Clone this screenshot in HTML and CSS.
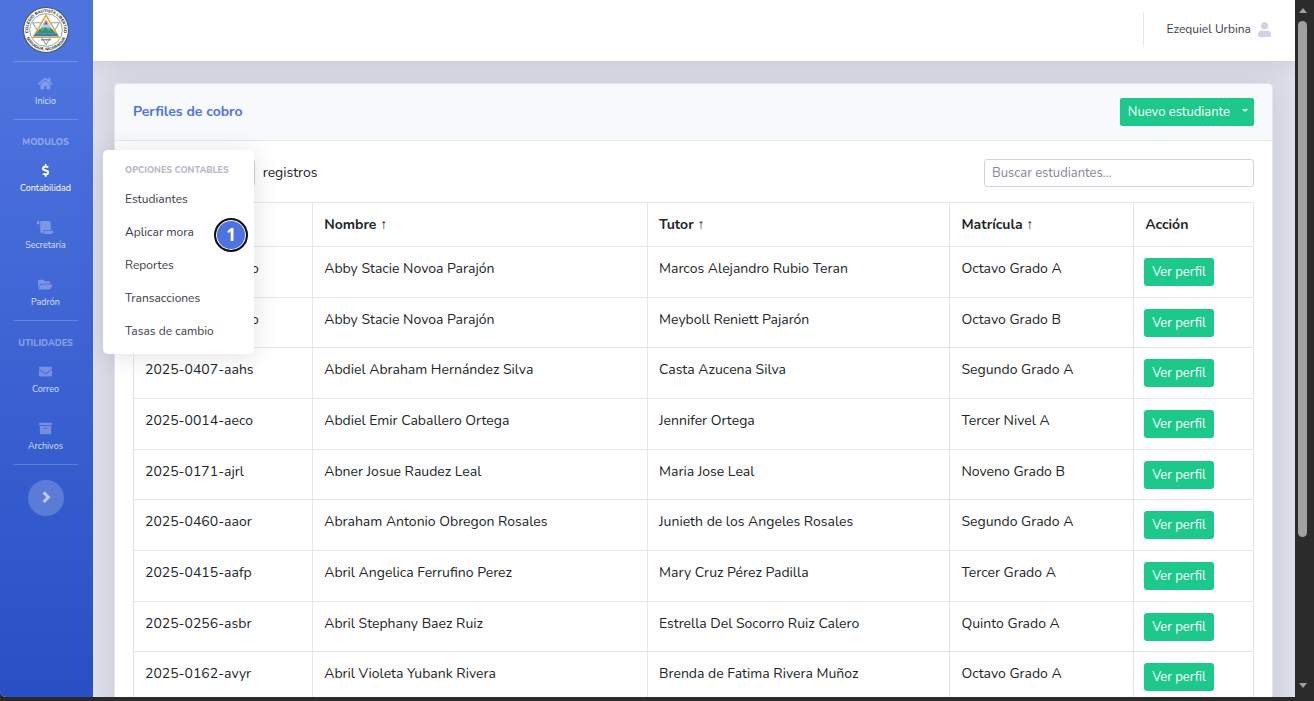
FILE: index.html
```html
<!DOCTYPE html>
<html lang="es">
<head>
<meta charset="utf-8">
<meta name="viewport" content="width=device-width, initial-scale=1">
<title>Perfiles de cobro</title>
<link rel="stylesheet" href="styles.css">
</head>
<body>
<div class="window">
  <div class="app">
    <nav class="sidebar" aria-label="Principal">
      <a class="brand" href="#" aria-label="Colegio Bautista Libertad">
        <svg class="brand-logo" viewBox="0 0 90 90">
          <defs>
            <path id="arc-top" d="M17 66A35 35 0 1 1 73 66"/>
            <path id="arc-bottom" d="M4 52A42 42 0 0 0 86 52"/>
          </defs>
          <circle cx="45" cy="45" r="44" fill="#fff" stroke="#3c5a50" stroke-width="2"/>
          <circle cx="45" cy="45" r="32" fill="#fff" stroke="#5d9583" stroke-width="1.500"/>
          <text class="seal-text"><textPath href="#arc-top" startOffset="50%" text-anchor="middle">COLEGIO BAUTISTA LIBERTAD</textPath></text>
          <text class="seal-text"><textPath href="#arc-bottom" startOffset="50%" text-anchor="middle">MANAGUA, NICARAGUA</textPath></text>
          <path d="M19 31H71L45 74Z" fill="#fff" stroke="#9aa3a0" stroke-width="2"/>
          <path d="M45 16L70 59H20Z" fill="#fff" stroke="#e6a63a" stroke-width="3"/>
          <path d="M45 22L56 41H34Z" fill="#a9d8ee"/>
          <path d="M45 27L49 34H41Z" fill="#d8413a"/>
          <path d="M36 40H54L64 52H26Z" fill="#4aa7dd"/>
          <path d="M25 52L33 42L38 47L44 39L50 47L56 42L65 52Z" fill="#43934b"/>
          <path d="M24 52H66L69 57H21Z" fill="#2f80c9"/>
          <path d="M35 64H55" stroke="#8c9290" stroke-width="3"/>
        </svg>
      </a>
      <hr class="divider">
      <a class="nav-item" href="#">
        <svg class="nav-icon" viewBox="0 0 576 512"><path d="M280.370 148.260L96 300.110V464a16 16 0 0 0 16 16l112.060-.29a16 16 0 0 0 15.920-16V368a16 16 0 0 1 16-16h64a16 16 0 0 1 16 16v95.640a16 16 0 0 0 16 16.050L464 480a16 16 0 0 0 16-16V300L295.670 148.260a12.190 12.190 0 0 0-15.300 0zM571.600 251.470L488 182.560V44.050a12 12 0 0 0-12-12h-56a12 12 0 0 0-12 12v72.610L318.470 43a48 48 0 0 0-61 0L4.340 251.470a12 12 0 0 0-1.600 16.900l25.500 31A12 12 0 0 0 45.150 301l235.220-193.740a12.190 12.190 0 0 1 15.300 0L530.900 301a12 12 0 0 0 16.900-1.600l25.500-31a12 12 0 0 0-1.700-16.930z"/></svg>
        <span>Inicio</span>
      </a>
      <hr class="divider">
      <h2 class="nav-heading">Modulos</h2>
      <div class="nav-group">
        <a class="nav-item active" href="#" aria-expanded="true">
          <svg class="nav-icon" viewBox="0 0 288 512"><path d="M209.200 233.400l-108-31.600C88.700 198.200 80 186.500 80 173.500c0-16.300 13.200-29.500 29.500-29.500h66.300c12.200 0 24.200 3.700 34.200 10.500 6.100 4.100 14.300 3.100 19.500-2l34.800-34c7.100-6.900 6.100-18.400-1.800-24.500C238 74.800 207.400 64.100 176 64V16c0-8.800-7.200-16-16-16h-32c-8.800 0-16 7.200-16 16v48h-2.500C45.800 64-5.400 118.700.5 183.600c4.200 46.100 39.400 83.600 83.800 96.600l102.500 30c12.500 3.700 21.200 15.300 21.200 28.300 0 16.300-13.200 29.500-29.500 29.500h-66.300C100 368 88 364.300 78 357.500c-6.100-4.100-14.300-3.100-19.500 2l-34.800 34c-7.100 6.900-6.100 18.400 1.800 24.500 24.500 19.200 55.100 29.900 86.500 30v48c0 8.800 7.200 16 16 16h32c8.800 0 16-7.200 16-16v-48.200c46.600-.9 90.300-28.600 105.700-72.700 21.500-61.600-14.600-124.800-72.500-141.700z"/></svg>
          <span>Contabilidad</span>
        </a>
        <div class="submenu">
          <h3 class="submenu-title">Opciones contables</h3>
          <a class="submenu-link" href="#">Estudiantes</a>
          <a class="submenu-link" href="#">Aplicar mora</a>
          <a class="submenu-link" href="#">Reportes</a>
          <a class="submenu-link" href="#">Transacciones</a>
          <a class="submenu-link" href="#">Tasas de cambio</a>
          <span class="step-badge">1</span>
        </div>
      </div>
      <a class="nav-item" href="#">
        <svg class="nav-icon" viewBox="0 0 640 512"><path d="M48 0C21.530 0 0 21.530 0 48v64c0 8.840 7.160 16 16 16h80V48C96 21.530 74.470 0 48 0zm208 412.570V352h288V96c0-52.940-43.060-96-96-96H111.590C121.740 13.410 128 29.920 128 48v368c0 38.870 34.650 69.650 74.750 63.120C234.220 474 256 444.460 256 412.570zM288 384v32c0 52.930-43.060 96-96 96h336c61.860 0 112-50.140 112-112 0-8.840-7.160-16-16-16H288z"/></svg>
        <span>Secretaría</span>
      </a>
      <a class="nav-item" href="#">
        <svg class="nav-icon" viewBox="0 0 576 512"><path d="M572.694 292.093L500.270 416.248A63.997 63.997 0 0 1 444.989 448H45.025c-18.523 0-30.064-20.093-20.731-36.093l72.424-124.155A64 64 0 0 1 152 256h399.964c18.523 0 30.064 20.093 20.730 36.093zM152 224h328v-48c0-26.510-21.490-48-48-48H272l-64-64H48C21.490 64 0 85.490 0 112v278.046l69.077-118.418C86.214 242.250 117.989 224 152 224z"/></svg>
        <span>Padrón</span>
      </a>
      <hr class="divider">
      <h2 class="nav-heading">Utilidades</h2>
      <a class="nav-item" href="#">
        <svg class="nav-icon" viewBox="0 0 512 512"><path d="M502.300 190.800c3.900-3.100 9.700-.2 9.700 4.700V400c0 26.500-21.500 48-48 48H48c-26.500 0-48-21.500-48-48V195.600c0-5 5.700-7.800 9.700-4.700 22.400 17.400 52.100 39.500 154.100 113.600 21.100 15.400 56.700 47.800 92.200 47.600 35.700.3 72-32.800 92.300-47.600 102-74.100 131.600-96.300 154-113.700zM256 320c23.200.4 56.600-29.200 73.400-41.400 132.700-96.300 142.800-104.700 173.400-128.700 5.800-4.500 9.200-11.500 9.200-18.900v-19c0-26.500-21.500-48-48-48H48c-26.500 0-48 21.500-48 48v19c0 7.400 3.400 14.300 9.200 18.900 30.600 23.900 40.700 32.400 173.400 128.700 16.800 12.200 50.200 41.800 73.400 41.400z"/></svg>
        <span>Correo</span>
      </a>
      <a class="nav-item" href="#">
        <svg class="nav-icon" viewBox="0 0 512 512"><path d="M32 448c0 17.700 14.300 32 32 32h384c17.700 0 32-14.300 32-32V160H32v288zm160-212c0-6.600 5.400-12 12-12h104c6.600 0 12 5.400 12 12v8c0 6.600-5.400 12-12 12H204c-6.600 0-12-5.400-12-12v-8zM480 32H32C14.300 32 0 46.300 0 64v48c0 8.800 7.200 16 16 16h480c8.800 0 16-7.200 16-16V64c0-17.700-14.300-32-32-32z"/></svg>
        <span>Archivos</span>
      </a>
      <hr class="divider">
      <button class="sidebar-toggle" type="button" aria-label="Expandir menú">
        <svg viewBox="0 0 10 12"><path d="M3 2L7 6L3 10" fill="none" stroke="currentColor" stroke-width="2.500"/></svg>
      </button>
    </nav>

    <div class="content">
      <header class="topbar">
        <a class="user" href="#">
          <span>Ezequiel Urbina</span>
          <svg class="user-icon" viewBox="0 0 448 512"><path d="M224 256c70.700 0 128-57.300 128-128S294.700 0 224 0 96 57.300 96 128s57.300 128 128 128zm89.600 32h-16.700c-22.200 10.200-46.900 16-72.900 16s-50.600-5.800-72.900-16h-16.700C60.200 288 0 348.200 0 422.400V464c0 26.500 21.500 48 48 48h352c26.500 0 48-21.500 48-48v-41.600c0-74.200-60.200-134.400-134.400-134.400z"/></svg>
        </a>
      </header>
      <main class="page">
        <section class="card">
          <div class="card-header">
            <h1 class="card-title">Perfiles de cobro</h1>
            <div class="btn-group">
              <button class="btn" type="button">Nuevo estudiante</button>
              <button class="btn btn-caret" type="button" aria-label="Más opciones"><span class="caret"></span></button>
            </div>
          </div>
          <div class="card-body">
            <div class="toolbar">
              <label class="page-size">
                <span>Mostrar</span>
                <select class="field"><option>10</option><option>25</option></select>
                <span>registros</span>
              </label>
              <input class="field search" type="search" placeholder="Buscar estudiantes..." aria-label="Buscar estudiantes">
            </div>
            <table class="table">
              <colgroup><col class="col-code"><col class="col-name"><col class="col-tutor"><col class="col-grade"><col class="col-action"></colgroup>
              <thead>
                <tr><th>Código ↑</th><th>Nombre ↑</th><th>Tutor ↑</th><th>Matrícula ↑</th><th>Acción</th></tr>
              </thead>
              <tbody>
                <tr><td>2025-0301-aamo</td><td>Abby Stacie Novoa Parajón</td><td>Marcos Alejandro Rubio Teran</td><td>Octavo Grado A</td><td><button class="btn" type="button">Ver perfil</button></td></tr>
                <tr><td>2025-0302-aamo</td><td>Abby Stacie Novoa Parajón</td><td>Meyboll Reniett Pajarón</td><td>Octavo Grado B</td><td><button class="btn" type="button">Ver perfil</button></td></tr>
                <tr><td>2025-0407-aahs</td><td>Abdiel Abraham Hernández Silva</td><td>Casta Azucena Silva</td><td>Segundo Grado A</td><td><button class="btn" type="button">Ver perfil</button></td></tr>
                <tr><td>2025-0014-aeco</td><td>Abdiel Emir Caballero Ortega</td><td>Jennifer Ortega</td><td>Tercer Nivel A</td><td><button class="btn" type="button">Ver perfil</button></td></tr>
                <tr><td>2025-0171-ajrl</td><td>Abner Josue Raudez Leal</td><td>Maria Jose Leal</td><td>Noveno Grado B</td><td><button class="btn" type="button">Ver perfil</button></td></tr>
                <tr><td>2025-0460-aaor</td><td>Abraham Antonio Obregon Rosales</td><td>Junieth de los Angeles Rosales</td><td>Segundo Grado A</td><td><button class="btn" type="button">Ver perfil</button></td></tr>
                <tr><td>2025-0415-aafp</td><td>Abril Angelica Ferrufino Perez</td><td>Mary Cruz Pérez Padilla</td><td>Tercer Grado A</td><td><button class="btn" type="button">Ver perfil</button></td></tr>
                <tr><td>2025-0256-asbr</td><td>Abril Stephany Baez Ruiz</td><td>Estrella Del Socorro Ruiz Calero</td><td>Quinto Grado A</td><td><button class="btn" type="button">Ver perfil</button></td></tr>
                <tr><td>2025-0162-avyr</td><td>Abril Violeta Yubank Rivera</td><td>Brenda de Fatima Rivera Muñoz</td><td>Octavo Grado A</td><td><button class="btn" type="button">Ver perfil</button></td></tr>
              </tbody>
            </table>
          </div>
        </section>
      </main>
    </div>
  </div>
  <div class="scrollbar" aria-hidden="true">
    <span class="arrow arrow-up"></span>
    <span class="track"><span class="thumb"></span></span>
    <span class="arrow arrow-down"></span>
  </div>
</div>
</body>
</html>
```
FILE: styles.css
```css
* {
  box-sizing: border-box;
}

body {
  margin: 0;
  background: #2a2a2a;
  color: #212529;
  font-family: Nunito, "Noto Sans", sans-serif;
  font-size: 14px;
  line-height: 22px;
}

h1, h2, h3 {
  margin: 0;
}

a {
  color: inherit;
  text-decoration: none;
}

button, input, select {
  font: inherit;
}

.window {
  display: flex;
  height: 100vh;
  padding-bottom: 4px;
  overflow: hidden;
}

.app {
  display: flex;
  flex: 1;
  min-width: 0;
  overflow: hidden;
  border-bottom-left-radius: 6px;
  background: #dddfeb;
}

/* Sidebar */
.sidebar {
  position: relative;
  z-index: 3;
  display: flex;
  flex-direction: column;
  flex: none;
  width: 93px;
  padding-right: 2px;
  background: linear-gradient(180deg, #4e73df 10%, #2850c4 100%);
  color: rgba(255, 255, 255, 0.8);
}

.brand {
  display: flex;
  align-items: center;
  justify-content: center;
  height: 61px;
  padding-bottom: 2px;
}

.brand-logo {
  width: 46px;
  height: 46px;
}

.seal-text {
  fill: #222;
  font-family: "Liberation Sans", sans-serif;
  font-size: 8px;
  font-weight: 700;
}

.divider {
  width: 65px;
  height: 1px;
  margin: 0 auto;
  border: 0;
  background: rgba(255, 255, 255, 0.2);
}

.nav-item {
  display: flex;
  flex-direction: column;
  align-items: center;
  gap: 5px;
  height: 57px;
  padding-top: 15px;
  font-size: 9px;
  line-height: 12px;
}

.nav-icon {
  height: 13px;
  fill: rgba(255, 255, 255, 0.3);
}

.nav-item.active {
  color: #fff;
}

.active .nav-icon {
  fill: #fff;
}

.nav-heading {
  height: 29px;
  padding-top: 16px;
  color: rgba(255, 255, 255, 0.4);
  font-size: 9px;
  font-weight: 800;
  line-height: 12px;
  text-align: center;
  text-transform: uppercase;
}

.sidebar-toggle {
  display: flex;
  align-items: center;
  justify-content: center;
  align-self: center;
  width: 36px;
  height: 36px;
  margin-top: 15px;
  padding: 0 0 2px;
  border: 0;
  border-radius: 50%;
  background: rgba(255, 255, 255, 0.2);
  color: rgba(255, 255, 255, 0.6);
}

.sidebar-toggle svg {
  width: 12px;
}

.nav-group {
  position: relative;
}

.submenu {
  position: absolute;
  top: 1px;
  left: 103px;
  width: 151px;
  padding: 14px 0 6px;
  border-radius: 5px;
  background: #fff;
  box-shadow: 0 2px 25px rgba(58, 59, 69, 0.15);
}

.submenu-title {
  margin-bottom: 6px;
  padding: 0 22px;
  color: #b7b9cc;
  font-size: 9px;
  font-weight: 800;
  line-height: 13px;
  text-transform: uppercase;
  white-space: nowrap;
}

.submenu-link {
  display: block;
  padding: 0 22px;
  color: #3a3b45;
  font-size: 12px;
  line-height: 33px;
}

.step-badge {
  position: absolute;
  top: 68px;
  right: 6px;
  width: 34px;
  height: 34px;
  border: 2px solid #111;
  border-radius: 50%;
  background: #4e73df;
  box-shadow: inset 0 0 0 1px #fff;
  color: #fff;
  font-family: "Noto Sans", sans-serif;
  font-size: 17px;
  font-weight: 700;
  line-height: 30px;
  text-align: center;
}

/* Content */
.content {
  display: flex;
  flex-direction: column;
  flex: 1;
  min-width: 0;
}

.topbar {
  position: relative;
  z-index: 1;
  display: flex;
  align-items: center;
  justify-content: flex-end;
  flex: none;
  height: 61px;
  padding: 0 24px 3px;
  background: #fff;
  box-shadow: 0 2px 25px rgba(58, 59, 69, 0.15);
}

.user {
  display: flex;
  align-items: center;
  gap: 7px;
  height: 35px;
  padding-left: 23px;
  border-left: 1px solid #e3e6f0;
  color: #3a3b45;
  font-size: 12px;
}

.user-icon {
  height: 15px;
  fill: #d1d3e2;
}

.page {
  padding: 22px 22px 0 21px;
}

.card {
  border: 1px solid #e3e6f0;
  border-radius: 5px;
  background: #fff;
  box-shadow: 0 2px 25px rgba(58, 59, 69, 0.15);
}

.card-header {
  display: flex;
  align-items: center;
  justify-content: space-between;
  height: 57px;
  padding: 0 18px;
  border-bottom: 1px solid #e3e6f0;
  border-radius: 4px 4px 0 0;
  background: #f8f9fc;
}

.card-title {
  color: #4e73df;
  font-size: 14px;
  font-weight: 700;
}

.btn {
  height: 28px;
  padding: 0 8px;
  border: 0;
  border-radius: 3px;
  background: #1cc88a;
  color: #fff;
  font-size: 13px;
  line-height: 26px;
  white-space: nowrap;
}

.btn-group {
  display: flex;
  border-radius: 3px;
  background: #1cc88a;
}

.btn-caret {
  display: flex;
  align-items: center;
  padding: 0 6px 3px 4px;
}

.caret {
  border: 3px solid transparent;
  border-top-color: #fff;
  border-bottom: 0;
}

.card-body {
  padding: 18px;
}

.toolbar {
  display: flex;
  align-items: center;
  justify-content: space-between;
  margin-bottom: 15px;
}

.page-size {
  display: flex;
  align-items: center;
  gap: 8px;
}

.field {
  width: 65px;
  height: 28px;
  padding: 0 7px;
  border: 1px solid #d1d3e2;
  border-radius: 3px;
  background: #fff;
  color: #6e707e;
  font-size: 13px;
}

.search {
  width: 270px;
}

.field::placeholder {
  color: #858796;
}

.table {
  width: 100%;
  border-collapse: collapse;
  table-layout: fixed;
}

.col-code { width: 16%; }
.col-name { width: 29.9%; }
.col-tutor { width: 27%; }
.col-grade { width: 16.4%; }
.col-action { width: 10.7%; }

.table th,
.table td {
  padding: 11px 11px 0;
  border: 1px solid #e3e6f0;
  text-align: left;
  vertical-align: top;
  white-space: nowrap;
}

.table th {
  height: 44px;
  font-weight: 700;
}

.table td {
  height: 51px;
}

.table tr:nth-child(3n + 2) td {
  height: 50px;
}

.table .btn {
  display: block;
}

.table td:last-child {
  padding: 11px 10px 0;
}

/* Window scrollbar */
.scrollbar {
  display: flex;
  flex-direction: column;
  align-items: center;
  flex: none;
  width: 19px;
  padding: 8px 4px 9px 0;
  background: #2b2b2b;
}

.arrow {
  border: 4px solid transparent;
}

.arrow-up {
  border-top: 0;
  border-bottom: 5px solid #a0a0a0;
}

.arrow-down {
  border-top: 5px solid #a0a0a0;
  border-bottom: 0;
}

.track {
  flex: 1;
  width: 9px;
  padding-top: 8px;
}

.thumb {
  display: block;
  height: 78%;
  border-radius: 5px;
  background: #a0a0a0;
}
```
